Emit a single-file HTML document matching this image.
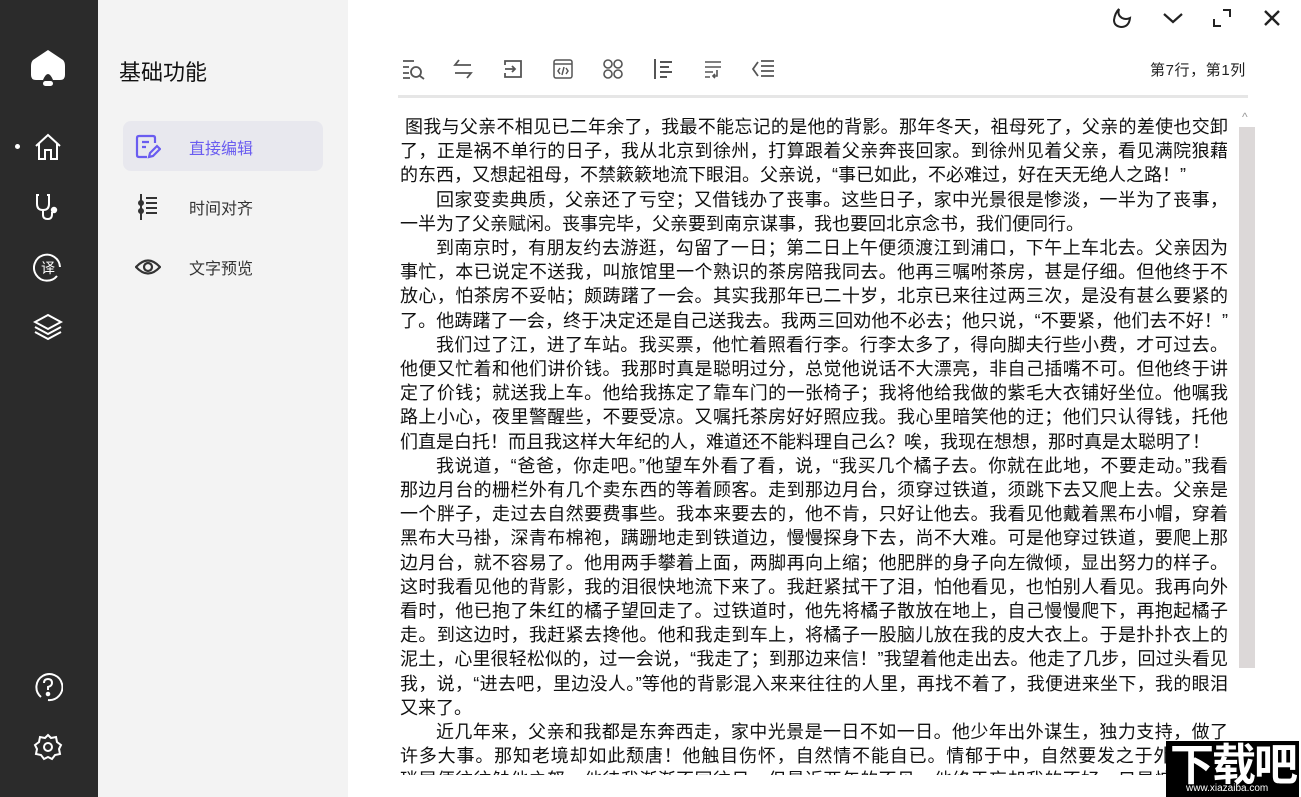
<!DOCTYPE html>
<html><head><meta charset="utf-8"><style>
*{margin:0;padding:0;box-sizing:border-box}
body{width:1301px;height:797px;overflow:hidden;background:#fff;font-family:"Liberation Sans","Noto Sans CJK SC",sans-serif;position:relative}
#side{position:absolute;left:0;top:0;width:98px;height:797px;background:#2b2b2b}
#side svg{position:absolute}
#panel{position:absolute;left:98px;top:0;width:250px;height:797px;background:#f3f3f3}
.title{position:absolute;left:21px;top:55px;font-size:22px;color:#111}
.item{position:absolute;left:25px;width:200px;height:50px;border-radius:8px;font-size:16px;color:#333}
.item span{position:absolute;left:66px;top:14px}
.item svg{position:absolute;left:12px;top:13px}
.sel{background:#e8e8ee;color:#6a5cf0}
#tb svg{position:absolute;top:58px}
#txt{position:absolute;left:400px;top:115px;width:840px;height:660px;overflow:hidden;font-size:18px;line-height:24.2px;color:#111;font-family:"Liberation Sans","Noto Sans CJK SC",sans-serif}
#txt div{white-space:nowrap;width:828px}
#txt div.j{text-align:justify;text-align-last:justify}
.ind{padding-left:36px}
</style></head><body>
<div id="side">
<svg style="left:29px;top:48px" width="38" height="40" viewBox="0 0 38 40"><path d="M19 2 L34 12 Q36 14 36 18 L36 27 Q36 32 31 32 L24 32 Q19 20 14 32 L7 32 Q2 32 2 27 L2 18 Q2 14 4 12Z" fill="#fff"/><rect x="14" y="33" width="10" height="5" rx="2.5" fill="#fff"/></svg>
<div style="position:absolute;left:15px;top:144px;width:5px;height:5px;border-radius:50%;background:#fff"></div>
<svg style="left:33px;top:132px" width="30" height="30" viewBox="0 0 30 30" fill="none" stroke="#fff" stroke-width="2"><path d="M3 14 L15 3 L27 14 M6 11 V27 H12 V18 H18 V27 H24 V11"/></svg>
<svg style="left:33px;top:192px" width="30" height="30" viewBox="0 0 30 30" fill="none" stroke="#fff" stroke-width="2"><path d="M6 3 H4 V12 Q4 18 10 18 Q16 18 16 12 V3 H14 M10 18 V23 Q10 27 15 27 Q19 27 19 22 V20"/><circle cx="21" cy="18" r="2.2" fill="#fff"/></svg>
<svg style="left:33px;top:252px" width="30" height="30" viewBox="0 0 30 30" fill="none" stroke="#fff" stroke-width="2"><path d="M24 24 A13 13 0 1 1 27 15"/><text x="15" y="21" font-size="14" fill="#fff" stroke="none" text-anchor="middle" font-family="Noto Sans CJK SC">译</text></svg>
<svg style="left:33px;top:312px" width="30" height="30" viewBox="0 0 30 30" fill="none" stroke="#fff" stroke-width="2"><path d="M15 3 L28 10 L15 17 L2 10Z M2 15 L15 22 L28 15 M2 20 L15 27 L28 20"/></svg>
<svg style="left:33px;top:672px" width="30" height="30" viewBox="0 0 30 30" fill="none" stroke="#fff" stroke-width="2"><path d="M8 25 A13 13 0 1 1 15 28"/><path d="M11 11 Q11 7 15 7 Q19 7 19 11 Q19 14 15 15 V18"/><circle cx="15" cy="22" r="1.3" fill="#fff"/></svg>
<svg style="left:33px;top:732px" width="30" height="30" viewBox="0 0 30 30" fill="none" stroke="#fff" stroke-width="2"><path d="M15 3 L18 6 L23 5 L24 10 L28 13 L26 17 L27 22 L22 23 L19 27 L15 25 L11 27 L8 23 L3 22 L4 17 L2 13 L6 10 L7 5 L12 6Z"/><circle cx="15" cy="15" r="4"/></svg>
</div>
<div id="panel">
<div class="title">基础功能</div>
<div class="item sel" style="top:121px"><svg width="26" height="26" viewBox="0 0 26 26" fill="none" stroke="#6a5cf0" stroke-width="2.2"><path d="M12 23 H4 Q2 23 2 21 V4 Q2 2 4 2 H18 Q20 2 20 4 V9 M7 8 H14 M7 13 H11 M14 23 L15 19 L22 12 L25 15 L18 22Z"/></svg><span>直接编辑</span></div>
<div class="item" style="top:181px"><svg width="26" height="26" viewBox="0 0 26 26" fill="none" stroke="#333" stroke-width="2"><path d="M6 0 V26 M11 4 H22 M11 9 H22 M11 14 H22 M11 19 H22"/><circle cx="6" cy="9" r="2" fill="#333"/><circle cx="6" cy="17" r="2" fill="#333"/></svg><span>时间对齐</span></div>
<div class="item" style="top:241px"><svg width="26" height="26" viewBox="0 0 26 26" fill="none" stroke="#333" stroke-width="2.2"><path d="M1 13 Q13 0 25 13 Q13 26 1 13Z"/><circle cx="13" cy="13" r="4"/></svg><span>文字预览</span></div>
</div>
<svg style="position:absolute;left:1110px;top:7px" width="24" height="22" viewBox="0 0 24 22" fill="none" stroke="#222" stroke-width="2"><path d="M9 2 Q7 8 12 11 Q16 13 20 11 Q19 20 11 20 Q4 19 4 13 Q5 6 9 2Z"/></svg>
<svg style="position:absolute;left:1162px;top:10px" width="22" height="16" viewBox="0 0 22 16" fill="none" stroke="#222" stroke-width="2.2"><path d="M2 4 L11 12 L20 4"/></svg>
<svg style="position:absolute;left:1212px;top:8px" width="20" height="20" viewBox="0 0 20 20" fill="none" stroke="#222" stroke-width="2"><path d="M11 2 H18 V9 M2 11 V18 H9"/></svg>
<svg style="position:absolute;left:1262px;top:8px" width="20" height="20" viewBox="0 0 20 20" fill="none" stroke="#222" stroke-width="2.4"><path d="M3 3 L17 17 M17 3 L3 17"/></svg>
<div id="tb">
<svg style="left:402px" width="24" height="22" viewBox="0 0 24 22" fill="none" stroke="#555" stroke-width="1.8"><path d="M1 3 H12 M1 9 H7 M1 15 H7 M1 20 H8"/><circle cx="14" cy="14" r="5"/><path d="M18 18 L22 21"/></svg>
<svg style="left:452px" width="22" height="22" viewBox="0 0 22 22" fill="none" stroke="#555" stroke-width="1.8"><path d="M7 2 L3 7 H19 M15 20 L19 15 H3"/></svg>
<svg style="left:502px" width="22" height="22" viewBox="0 0 22 22" fill="none" stroke="#555" stroke-width="1.8"><path d="M3 7 V3 H19 V19 H3 V15 M3 11 H13 M10 8 L13 11 L10 14"/></svg>
<svg style="left:552px" width="22" height="22" viewBox="0 0 22 22" fill="none" stroke="#555" stroke-width="1.5"><rect x="2" y="2" width="18" height="18" rx="2"/><path d="M2 6 H20 M8 10 L6 13 L8 16 M14 10 L16 13 L14 16 M12 9 L10 17"/></svg>
<svg style="left:602px" width="22" height="22" viewBox="0 0 22 22" fill="none" stroke="#555" stroke-width="1.6"><circle cx="6" cy="6" r="4"/><circle cx="16" cy="6" r="4"/><circle cx="6" cy="16" r="4"/><circle cx="16" cy="16" r="4"/></svg>
<svg style="left:652px" width="22" height="22" viewBox="0 0 22 22" fill="none" stroke="#555" stroke-width="2"><path d="M3 1 V21 M8 4 H20 M8 9 H17 M8 14 H20 M8 19 H15"/></svg>
<svg style="left:702px" width="22" height="22" viewBox="0 0 22 22" fill="none" stroke="#555" stroke-width="1.6"><path d="M3 4 H19 M3 9 H19 M3 14 H11 M3 19 H8 M15 12 V18 H11 M13 16 L11 18 L13 20"/></svg>
<svg style="left:752px" width="24" height="22" viewBox="0 0 24 22" fill="none" stroke="#555" stroke-width="1.8"><path d="M6 4 L1 11 L6 18 M9 3 H22 M9 8 H22 M9 13 H22 M9 18 H22"/></svg>
</div>
<div style="position:absolute;left:1150px;top:59px;font-size:15px;color:#222;letter-spacing:0.6px">第7行，第1列</div>
<div style="position:absolute;left:398px;top:95px;width:850px;height:3px;background:#e6e6e6"></div>
<div style="position:absolute;left:1242px;top:110px;font-size:12px;color:#999">^</div>
<div style="position:absolute;left:1239px;top:127px;width:16px;height:541px;background:#dcd8d8"></div>
<div id="txt">
<div class="j" style="padding-left:5px">图我与父亲不相见已二年余了，我最不能忘记的是他的背影。那年冬天，祖母死了，父亲的差使也交卸</div>
<div class="j">了，正是祸不单行的日子，我从北京到徐州，打算跟着父亲奔丧回家。到徐州见着父亲，看见满院狼藉</div>
<div>的东西，又想起祖母，不禁簌簌地流下眼泪。父亲说，“事已如此，不必难过，好在天无绝人之路！”</div>
<div class="j ind">回家变卖典质，父亲还了亏空；又借钱办了丧事。这些日子，家中光景很是惨淡，一半为了丧事，</div>
<div>一半为了父亲赋闲。丧事完毕，父亲要到南京谋事，我也要回北京念书，我们便同行。</div>
<div class="j ind">到南京时，有朋友约去游逛，勾留了一日；第二日上午便须渡江到浦口，下午上车北去。父亲因为</div>
<div class="j">事忙，本已说定不送我，叫旅馆里一个熟识的茶房陪我同去。他再三嘱咐茶房，甚是仔细。但他终于不</div>
<div class="j">放心，怕茶房不妥帖；颇踌躇了一会。其实我那年已二十岁，北京已来往过两三次，是没有甚么要紧的</div>
<div class="j">了。他踌躇了一会，终于决定还是自己送我去。我两三回劝他不必去；他只说，“不要紧，他们去不好！”</div>
<div class="j ind">我们过了江，进了车站。我买票，他忙着照看行李。行李太多了，得向脚夫行些小费，才可过去。</div>
<div class="j">他便又忙着和他们讲价钱。我那时真是聪明过分，总觉他说话不大漂亮，非自己插嘴不可。但他终于讲</div>
<div class="j">定了价钱；就送我上车。他给我拣定了靠车门的一张椅子；我将他给我做的紫毛大衣铺好坐位。他嘱我</div>
<div class="j">路上小心，夜里警醒些，不要受凉。又嘱托茶房好好照应我。我心里暗笑他的迂；他们只认得钱，托他</div>
<div>们直是白托！而且我这样大年纪的人，难道还不能料理自己么？唉，我现在想想，那时真是太聪明了！</div>
<div class="j ind">我说道，“爸爸，你走吧。”他望车外看了看，说，“我买几个橘子去。你就在此地，不要走动。”我看</div>
<div class="j">那边月台的栅栏外有几个卖东西的等着顾客。走到那边月台，须穿过铁道，须跳下去又爬上去。父亲是</div>
<div class="j">一个胖子，走过去自然要费事些。我本来要去的，他不肯，只好让他去。我看见他戴着黑布小帽，穿着</div>
<div class="j">黑布大马褂，深青布棉袍，蹒跚地走到铁道边，慢慢探身下去，尚不大难。可是他穿过铁道，要爬上那</div>
<div class="j">边月台，就不容易了。他用两手攀着上面，两脚再向上缩；他肥胖的身子向左微倾，显出努力的样子。</div>
<div class="j">这时我看见他的背影，我的泪很快地流下来了。我赶紧拭干了泪，怕他看见，也怕别人看见。我再向外</div>
<div class="j">看时，他已抱了朱红的橘子望回走了。过铁道时，他先将橘子散放在地上，自己慢慢爬下，再抱起橘子</div>
<div class="j">走。到这边时，我赶紧去搀他。他和我走到车上，将橘子一股脑儿放在我的皮大衣上。于是扑扑衣上的</div>
<div class="j">泥土，心里很轻松似的，过一会说，“我走了；到那边来信！”我望着他走出去。他走了几步，回过头看见</div>
<div class="j">我，说，“进去吧，里边没人。”等他的背影混入来来往往的人里，再找不着了，我便进来坐下，我的眼泪</div>
<div>又来了。</div>
<div class="j ind">近几年来，父亲和我都是东奔西走，家中光景是一日不如一日。他少年出外谋生，独力支持，做了</div>
<div class="j">许多大事。那知老境却如此颓唐！他触目伤怀，自然情不能自已。情郁于中，自然要发之于外；家庭</div>
<div class="j">琐屑便往往触他之怒。他待我渐渐不同往日。但最近两年的不见，他终于忘却我的不好，只是惦记着我</div>
</div>
<div style="position:absolute;left:1166px;top:741px;width:133px;height:56px;background:#000;color:#fff">
<div style="position:absolute;left:4px;top:-4px;font-size:44px;font-weight:bold;line-height:48px;letter-spacing:-2px;font-family:'Noto Sans CJK SC',sans-serif">下载吧</div>
<div style="position:absolute;left:20px;top:42px;font-size:10px;line-height:12px;font-family:'Liberation Sans',sans-serif">www.xiazaiba.com</div>
</div>
</body></html>
